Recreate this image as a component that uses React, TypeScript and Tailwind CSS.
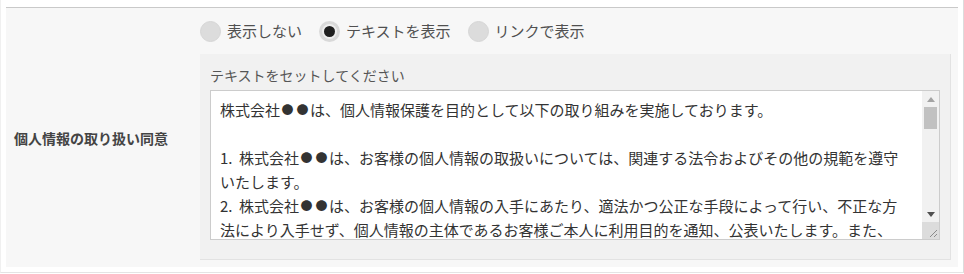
import React from "react";

const lines = [
  "株式会社●●は、個人情報保護を目的として以下の取り組みを実施しております。",
  "",
  "1.|株式会社●●は、お客様の個人情報の取扱いについては、関連する法令およびその他の規範を遵守",
  "いたします。",
  "2.|株式会社●●は、お客様の個人情報の入手にあたり、適法かつ公正な手段によって行い、不正な方",
  "法により入手せず、個人情報の主体であるお客様ご本人に利用目的を通知、公表いたします。また、",
];

function renderLine(l: string) {
  let num: string | null = null;
  let rest = l;
  const idx = l.indexOf("|");
  if (idx >= 0) {
    num = l.slice(0, idx);
    rest = l.slice(idx + 1);
  }
  const parts = rest.split("●");
  const out: React.ReactNode[] = [];
  if (num) {
    out.push(
      <span key="n" className="inline-block w-[19px]">
        {num}
      </span>
    );
  }
  parts.forEach((p, i) => {
    out.push(<React.Fragment key={"p" + i}>{p}</React.Fragment>);
    if (i < parts.length - 1) {
      out.push(
        <span key={"d" + i} className="inline-block w-[15px] text-center text-[12px] align-top">
          ●
        </span>
      );
    }
  });
  return out;
}

function Radio({ label, checked }: { label: string; checked?: boolean }) {
  return (
    <label className="flex items-center mr-[17px]">
      <span
        className={
          checked
            ? "w-[21px] h-[21px] rounded-full bg-[#d9d9d9] flex items-center justify-center"
            : "w-[21px] h-[21px] rounded-full bg-[#dcdcdc] border border-[#d6d6d6]"
        }
      >
        {checked && (
          <span className="w-[15px] h-[15px] rounded-full bg-[#eeeeee] flex items-center justify-center">
            <span className="w-[11px] h-[11px] rounded-full bg-[#1f1f1f]" />
          </span>
        )}
      </span>
      <span className="ml-[6px] text-[15px] leading-[22px] text-[#505050]">{label}</span>
    </label>
  );
}

export default function App() {
  return (
    <div className="w-[964px] h-[273px] bg-white border-l border-l-[#f0f0f0] border-r border-r-[#dcdcdc] border-b border-b-[#e4e4e4] pl-[5px] pr-[5px] pt-[7px] pb-[5px] font-['Noto_Sans_CJK_JP','Noto_Sans',sans-serif]">
      <div className="flex h-full bg-[#f7f7f7] border-t border-[#c9c9c9]">
        <div className="w-[194px] shrink-0 flex items-center pl-[8px]">
          <span className="text-[14px] font-bold text-[#444444] leading-[20px]">個人情報の取り扱い同意</span>
        </div>
        <div className="flex-1 flex flex-col pr-[7px] pb-[7px]">
          <div className="h-[46px] flex items-center">
            <Radio label="表示しない" />
            <Radio label="テキストを表示" checked />
            <Radio label="リンクで表示" />
          </div>
          <div className="bg-[#f1f1f1] border-r border-b border-[#e2e2e2] pt-[10px] px-[10px] pb-[19px]">
            <div className="text-[14px] leading-[22px] text-[#555555] mb-[4px]">テキストをセットしてください</div>
            <div className="h-[150px] bg-white border border-[#cccccc] flex overflow-hidden">
              <div className="flex-1 overflow-hidden pl-[9px] pt-[7px] text-[15px] leading-[24px] text-[#333333]">
                {lines.map((l, i) => (
                  <div key={i} className="whitespace-pre h-[24px]">
                    {renderLine(l)}
                  </div>
                ))}
              </div>
              <div className="w-[17px] shrink-0 flex flex-col bg-[#f1f1f1]">
                <div className="h-[16px] flex items-center justify-center">
                  <svg width="8" height="5" viewBox="0 0 8 5">
                    <path d="M0 5 L4 0 L8 5 Z" fill="#a3a3a3" />
                  </svg>
                </div>
                <div className="flex-1 relative">
                  <div className="absolute left-[2px] top-0 w-[13px] h-[22px] bg-[#c1c1c1]" />
                </div>
                <div className="h-[16px] flex items-center justify-center">
                  <svg width="8" height="5" viewBox="0 0 8 5">
                    <path d="M0 0 L8 0 L4 5 Z" fill="#505050" />
                  </svg>
                </div>
                <div className="h-[17px] bg-[#dcdcdc] flex items-end justify-end">
                  <svg width="17" height="17" viewBox="0 0 17 17">
                    <path d="M15 8 L8 15 M15 12 L12 15" stroke="#8a8a8a" strokeWidth="1" />
                  </svg>
                </div>
              </div>
            </div>
          </div>
        </div>
      </div>
    </div>
  );
}
